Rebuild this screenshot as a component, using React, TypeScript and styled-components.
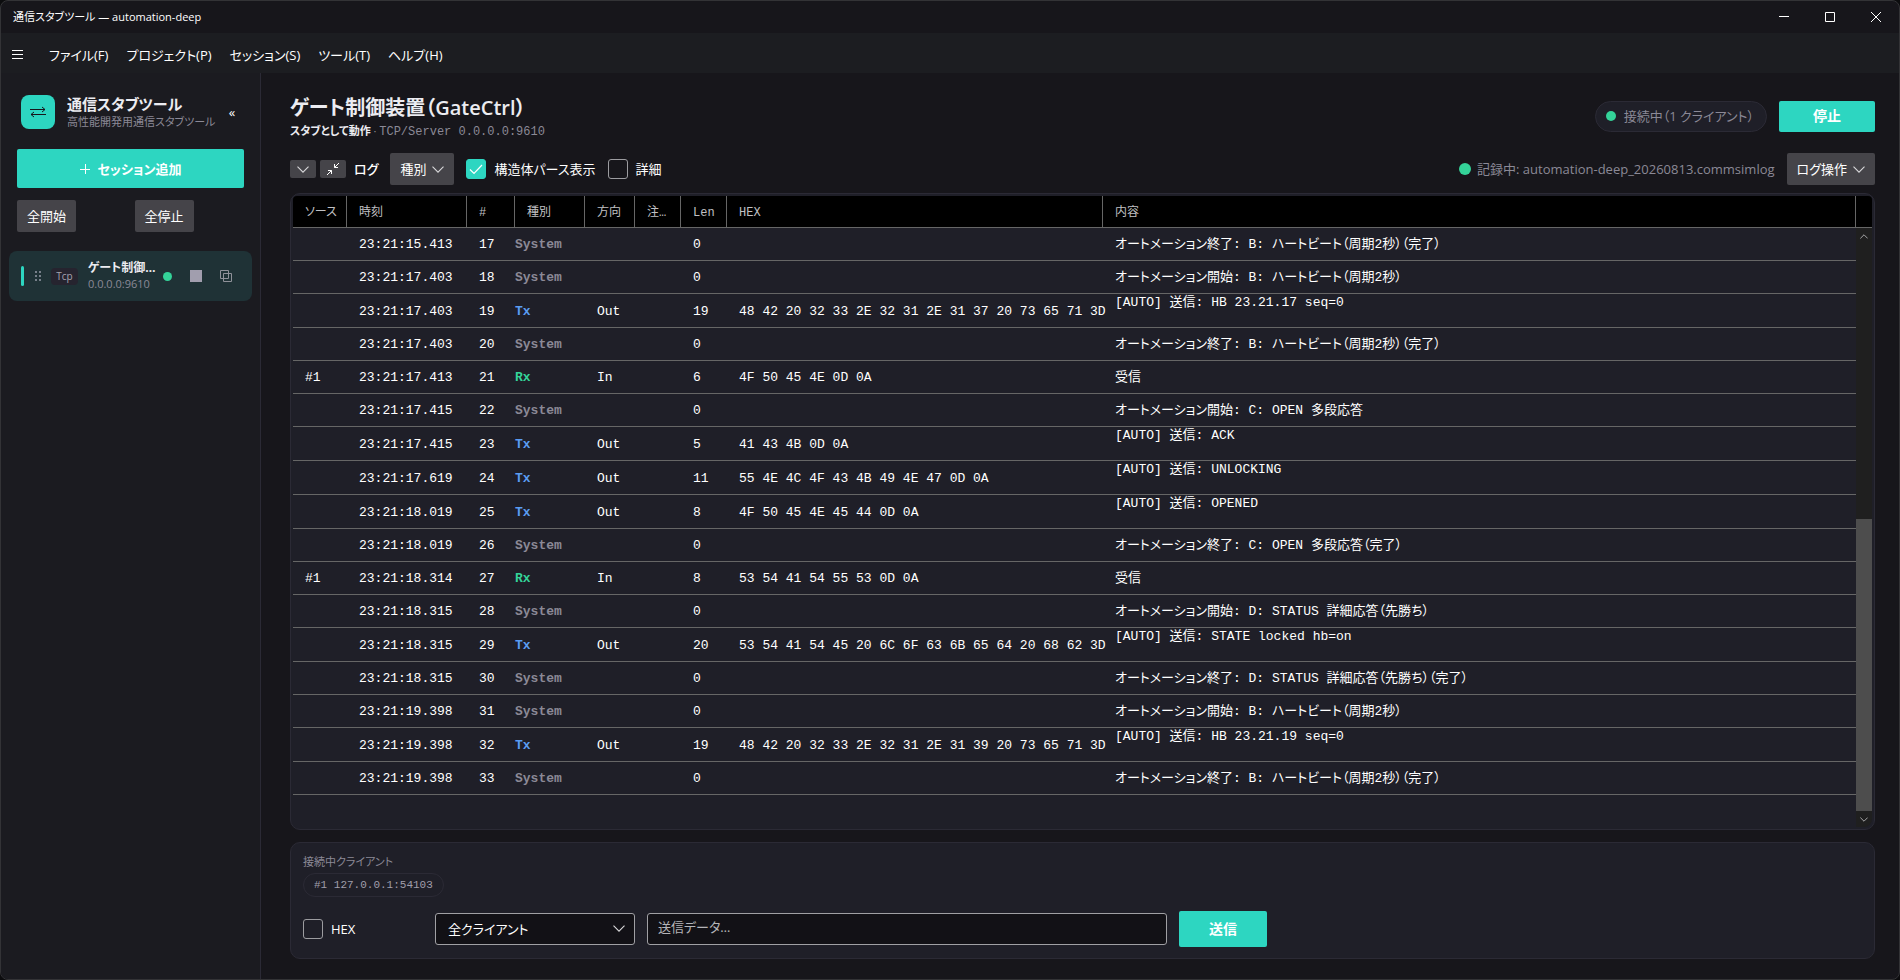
import React from "react";
import styled, { createGlobalStyle, css } from "styled-components";

const c = {
  accent: "#2dd6c1",
  green: "#34d399",
  blue: "#5a9cf2",
  bg: "#17161b",
  side: "#1b1b20",
  menu: "#1c1d21",
  card: "#1f1f28",
  line: "#2b2a35",
  btn: "#454449",
  grid: "#666666",
  muted: "#8b8996",
  text: "#ececf1",
};

const ui = `"Open Sans", "Noto Sans CJK JP", sans-serif`;
const mono = `"Liberation Mono", "Noto Sans CJK JP", monospace`;

const Global = createGlobalStyle`
  * { box-sizing: border-box; }
  body {
    margin: 0;
    background: #0c0c0e;
    color: #ffffff;
    font: 13px/20px ${ui};
    font-feature-settings: "palt";
  }
  button, input, select { font: inherit; font-feature-settings: inherit; color: inherit; margin: 0; }
  button { cursor: pointer; padding: 0; border: 0; background: none; }
  h1, h2, p { margin: 0; }
  svg { display: block; flex: none; }
`;

const Window = styled.div`
  height: 100vh;
  display: flex;
  flex-direction: column;
  border: 1px solid #333336;
  border-radius: 8px;
  overflow: hidden;
  background: ${c.bg};
`;

const TitleBar = styled.header`
  height: 32px;
  flex: none;
  display: flex;
  align-items: center;
  justify-content: space-between;
  padding-left: 12px;
  font-size: 11px;
`;

const Caption = styled.div`
  display: flex;
  align-self: stretch;
`;

const CaptionButton = styled.button`
  width: 46px;
  display: grid;
  place-items: center;
`;

const MenuBar = styled.nav`
  height: 40px;
  flex: none;
  display: flex;
  align-items: center;
  gap: 18px;
  padding: 4px 11px 0;
  background: ${c.menu};
`;

const MenuItem = styled.button`
  white-space: nowrap;
`;

const Burger = styled.button`
  margin-right: 8px;
`;

const Body = styled.div`
  flex: 1;
  min-height: 0;
  display: flex;
`;

const Sidebar = styled.aside`
  width: 260px;
  flex: none;
  padding: 21px 8px;
  background: ${c.side};
  border-right: 1px solid ${c.line};
`;

const Brand = styled.div`
  display: flex;
  align-items: center;
  gap: 12px;
  padding: 0 12px;
`;

const Logo = styled.div`
  width: 34px;
  height: 34px;
  flex: none;
  display: grid;
  place-items: center;
  border-radius: 8px;
  background: ${c.accent};
`;

const BrandText = styled.div`
  flex: 1;
  min-width: 0;
  white-space: nowrap;
`;

const BrandName = styled.h2`
  font-size: 15px;
  line-height: 20px;
  font-weight: 700;
  color: ${c.text};
`;

const Small = styled.p`
  font-size: 11px;
  line-height: 16px;
  color: ${c.muted};
`;

const Collapse = styled.button`
  width: 16px;
`;

const Primary = styled.button`
  display: flex;
  align-items: center;
  justify-content: center;
  gap: 8px;
  background: ${c.accent};
  border-radius: 2px;
  font-size: 14px;
  font-weight: 700;
`;

const AddButton = styled(Primary)`
  width: 227px;
  height: 39px;
  margin: 19px 8px 12px;
  font-size: 13px;
`;

const Gray = styled.button`
  height: 32px;
  padding: 0 10px;
  display: flex;
  align-items: center;
  gap: 6px;
  border-radius: 2px;
  background: ${c.btn};
  white-space: nowrap;
`;

const SideActions = styled.div`
  display: grid;
  grid-template-columns: 1fr 1fr;
  justify-items: start;
  padding: 0 0 0 8px;
  margin-bottom: 19px;
`;

const Session = styled.div`
  height: 50px;
  display: flex;
  align-items: center;
  padding: 0 20px 0 12px;
  border-radius: 8px;
  background: #1f3236;
`;

const ActiveBar = styled.span`
  width: 3px;
  height: 20px;
  border-radius: 2px;
  background: ${c.accent};
`;

const Badge = styled.span`
  width: 27px;
  margin: 0 10px 0 9px;
  border-radius: 4px;
  background: #26242f;
  color: #a5a3b0;
  font-size: 10px;
  line-height: 17px;
  text-align: center;
`;

const SessionText = styled.div`
  width: 66px;
  flex: none;
`;

const SessionName = styled.div`
  font-size: 12px;
  line-height: 16px;
  font-weight: 700;
  color: ${c.text};
  white-space: nowrap;
`;

const SessionAddr = styled.div`
  font-size: 11px;
  line-height: 16px;
  color: ${c.muted};
`;

const Dot = styled.span<{ $size: number }>`
  width: ${(p) => p.$size}px;
  height: ${(p) => p.$size}px;
  flex: none;
  border-radius: 50%;
  background: ${c.green};
`;

const SessionTools = styled.div`
  flex: 1;
  display: flex;
  align-items: center;
  justify-content: space-between;
  margin-left: 9px;
`;

const Main = styled.main`
  flex: 1;
  min-width: 0;
  display: flex;
  flex-direction: column;
  padding: 20px 24px 20px 29px;
`;

const Head = styled.div`
  display: flex;
  justify-content: space-between;
  align-items: center;
  height: 46px;
`;

const HeadText = styled.div`
  padding-top: 2px;
  white-space: nowrap;
`;

const HeadTitle = styled.h1`
  font-size: 20px;
  line-height: 28px;
  font-weight: 600;
  color: ${c.text};
`;

const HeadSub = styled.p`
  font-size: 11px;
  line-height: 18px;
  color: ${c.muted};
  b { color: ${c.text}; }
  span { font-family: ${mono}; font-size: 12px; }
`;

const Row = styled.div<{ $gap: number }>`
  display: flex;
  align-items: center;
  gap: ${(p) => p.$gap}px;
`;

const StatusPill = styled.div`
  height: 31px;
  display: flex;
  align-items: center;
  gap: 8px;
  padding: 0 12px 0 10px;
  border: 1px solid ${c.line};
  border-radius: 16px;
  background: ${c.card};
  color: ${c.muted};
  white-space: nowrap;
`;

const StopButton = styled(Primary)`
  width: 96px;
  height: 31px;
`;

const Toolbar = styled.div`
  display: flex;
  justify-content: space-between;
  align-items: center;
  margin: 14px 0 8px;
`;

const IconButton = styled.button`
  width: 26px;
  height: 18px;
  display: grid;
  place-items: center;
  border-radius: 2px;
  background: ${c.btn};
`;

const ToolLabel = styled.span`
  margin-left: 4px;
  font-weight: 500;
`;

const Recording = styled.div`
  display: flex;
  align-items: center;
  gap: 6px;
  color: ${c.muted};
  white-space: nowrap;
`;

const CheckLabel = styled.label`
  display: flex;
  align-items: center;
  gap: 8px;
  white-space: nowrap;
`;

const CheckBox = styled.span`
  position: relative;
  width: 20px;
  height: 20px;
  input {
    appearance: none;
    display: block;
    width: 20px;
    height: 20px;
    border: 1px solid #9c9ca0;
    border-radius: 3px;
  }
  input:checked { background: ${c.accent}; border-color: ${c.accent}; }
  svg { position: absolute; inset: 0; pointer-events: none; visibility: hidden; }
  input:checked + svg { visibility: visible; }
`;

const Card = styled.section`
  border: 1px solid ${c.line};
  border-radius: 10px;
  background: ${c.card};
`;

const LogCard = styled(Card)`
  flex: 1;
  min-height: 0;
  padding: 2px;
`;

const LogView = styled.div`
  position: relative;
  height: 100%;
  overflow: hidden;
  border-radius: 4px 4px 8px 0;
`;

const LogTable = styled.table`
  width: 100%;
  table-layout: fixed;
  border-collapse: separate;
  border-spacing: 0;
  font-family: ${mono};
  font-size: 13px;
  line-height: 18px;
  white-space: nowrap;
`;

const Th = styled.th`
  height: 32px;
  padding: 2px 0 0 12px;
  text-align: left;
  font-size: 12px;
  font-weight: 400;
  color: #c0c0c4;
  background: #000000;
  border-bottom: 1px solid ${c.grid};
  border-right: 1px solid ${c.grid};
  &:last-child { border-right: 0; padding: 0; }
`;

const Td = styled.td<{ $top?: boolean }>`
  height: 33px;
  padding: 2px 0 0 12px;
  vertical-align: middle;
  border-bottom: 1px solid ${c.grid};
  &:last-child { border-bottom: 0; padding: 0; }
  ${(p) => p.$top && css`height: 34px; padding-top: 0; vertical-align: top;`}
`;

const kindColor: Record<string, string> = { System: c.muted, Tx: c.blue, Rx: c.green };

const KindTd = styled(Td)<{ $kind: string }>`
  padding-left: 0;
  font-weight: 700;
  color: ${(p) => kindColor[p.$kind]};
`;

const ScrollBar = styled.div`
  position: absolute;
  top: 32px;
  right: 0;
  bottom: 0;
  width: 16px;
  display: flex;
  flex-direction: column;
  background: #1f1f1f;
`;

const ScrollArrow = styled.button`
  height: 16px;
  display: grid;
  place-items: center;
`;

const ScrollTrack = styled.div`
  flex: 1;
  display: flex;
  flex-direction: column;
  justify-content: flex-end;
`;

const ScrollThumb = styled.div`
  height: 51.5%;
  background: #4d4d4d;
`;

const SendCard = styled(Card)`
  height: 117px;
  flex: none;
  margin-top: 12px;
  padding: 11px 12px;
`;

const ClientPill = styled.div`
  width: fit-content;
  height: 24px;
  margin: 3px 0 14px;
  padding: 0 10px;
  border: 1px solid ${c.line};
  border-radius: 12px;
  color: #a09eab;
  font: 11px/22px ${mono};
`;

const SendRow = styled.form`
  display: flex;
  align-items: center;
  gap: 12px;
`;

const HexField = styled.div`
  width: 120px;
  flex: none;
`;

const SelectBox = styled.div`
  position: relative;
  width: 200px;
  flex: none;
  select {
    appearance: none;
    display: block;
    width: 100%;
    height: 32px;
    padding: 0 12px;
    background: #121116;
    border: 1px solid #a0a0a4;
    border-radius: 3px;
  }
  svg { position: absolute; right: 10px; top: 12px; pointer-events: none; }
`;

const TextInput = styled.input`
  flex: 0 1 520px;
  min-width: 0;
  height: 32px;
  padding: 0 10px 5px;
  background: #121116;
  border: 1px solid #a0a0a4;
  border-radius: 3px;
  &::placeholder { color: #b4b4b8; opacity: 1; }
`;

const SendButton = styled(Primary)`
  width: 88px;
  height: 36px;
`;

const Chevron = ({ w = 12, up = false, color = "#d8d8da" }: { w?: number; up?: boolean; color?: string }) => (
  <svg width={w} height={w / 2 + 1} viewBox="0 0 12 7" fill="none" stroke={color} strokeWidth="1.1">
    <path d={up ? "M.5 6.4 6 .9l5.5 5.5" : "M.5.6 6 6.1 11.5.6"} />
  </svg>
);

const Check = ({ label, checked = false }: { label: string; checked?: boolean }) => (
  <CheckLabel>
    <CheckBox>
      <input type="checkbox" defaultChecked={checked} />
      <svg width="20" height="20" viewBox="0 0 20 20" fill="none" stroke="#fff" strokeWidth="1.2">
        <path d="m4 10.5 4 4 8-8.500" />
      </svg>
    </CheckBox>
    {label}
  </CheckLabel>
);

type Entry = [src: string, time: string, kind: string, dir: string, len: number, hex: string, body: string];

const entries: Entry[] = [
  ["", "23:21:15.413", "System", "", 0, "", "オートメーション終了: B: ハートビート（周期2秒）（完了）"],
  ["", "23:21:17.403", "System", "", 0, "", "オートメーション開始: B: ハートビート（周期2秒）"],
  ["", "23:21:17.403", "Tx", "Out", 19, "48 42 20 32 33 2E 32 31 2E 31 37 20 73 65 71 3D", "[AUTO] 送信: HB 23.21.17 seq=0"],
  ["", "23:21:17.403", "System", "", 0, "", "オートメーション終了: B: ハートビート（周期2秒）（完了）"],
  ["#1", "23:21:17.413", "Rx", "In", 6, "4F 50 45 4E 0D 0A", "受信"],
  ["", "23:21:17.415", "System", "", 0, "", "オートメーション開始: C: OPEN 多段応答"],
  ["", "23:21:17.415", "Tx", "Out", 5, "41 43 4B 0D 0A", "[AUTO] 送信: ACK"],
  ["", "23:21:17.619", "Tx", "Out", 11, "55 4E 4C 4F 43 4B 49 4E 47 0D 0A", "[AUTO] 送信: UNLOCKING"],
  ["", "23:21:18.019", "Tx", "Out", 8, "4F 50 45 4E 45 44 0D 0A", "[AUTO] 送信: OPENED"],
  ["", "23:21:18.019", "System", "", 0, "", "オートメーション終了: C: OPEN 多段応答（完了）"],
  ["#1", "23:21:18.314", "Rx", "In", 8, "53 54 41 54 55 53 0D 0A", "受信"],
  ["", "23:21:18.315", "System", "", 0, "", "オートメーション開始: D: STATUS 詳細応答（先勝ち）"],
  ["", "23:21:18.315", "Tx", "Out", 20, "53 54 41 54 45 20 6C 6F 63 6B 65 64 20 68 62 3D", "[AUTO] 送信: STATE locked hb=on"],
  ["", "23:21:18.315", "System", "", 0, "", "オートメーション終了: D: STATUS 詳細応答（先勝ち）（完了）"],
  ["", "23:21:19.398", "System", "", 0, "", "オートメーション開始: B: ハートビート（周期2秒）"],
  ["", "23:21:19.398", "Tx", "Out", 19, "48 42 20 32 33 2E 32 31 2E 31 39 20 73 65 71 3D", "[AUTO] 送信: HB 23.21.19 seq=0"],
  ["", "23:21:19.398", "System", "", 0, "", "オートメーション終了: B: ハートビート（周期2秒）（完了）"],
];

const columns: [string, number | undefined][] = [
  ["ソース", 54], ["時刻", 120], ["#", 48], ["種別", 70], ["方向", 50],
  ["注…", 46], ["Len", 46], ["HEX", 376], ["内容", undefined], ["", 16],
];

export default function App() {
  return (
    <>
      <Global />
      <Window>
        <TitleBar>
          <span>通信スタブツール — automation-deep</span>
          <Caption>
            <CaptionButton aria-label="最小化">
              <svg width="10" height="10" stroke="#fff"><path d="M0 4.5h10" /></svg>
            </CaptionButton>
            <CaptionButton aria-label="最大化">
              <svg width="10" height="10" stroke="#fff" fill="none"><path d="M.5.5h9v9h-9z" /></svg>
            </CaptionButton>
            <CaptionButton aria-label="閉じる">
              <svg width="10" height="10" stroke="#fff"><path d="m0 0 10 10M10 0 0 10" /></svg>
            </CaptionButton>
          </Caption>
        </TitleBar>
        <MenuBar>
          <Burger aria-label="メニュー">
            <svg width="11" height="12" stroke="#fff"><path d="M0 1.5h11M0 5.5h11M0 9.5h11" /></svg>
          </Burger>
          {["ファイル(F)", "プロジェクト(P)", "セッション(S)", "ツール(T)", "ヘルプ(H)"].map((m) => (
            <MenuItem key={m}>{m}</MenuItem>
          ))}
        </MenuBar>
        <Body>
          <Sidebar>
            <Brand>
              <Logo>
                <svg width="16" height="12" viewBox="0 0 16 12" fill="none" stroke="#17161b">
                  <path d="M0 3.5h15M12 1l3 2.5L12 6M16 8.5H1M4 6 1 8.5 4 11" />
                </svg>
              </Logo>
              <BrandText>
                <BrandName>通信スタブツール</BrandName>
                <Small>高性能開発用通信スタブツール</Small>
              </BrandText>
              <Collapse aria-label="サイドバーを閉じる">«</Collapse>
            </Brand>
            <AddButton>
              <svg width="10" height="10" stroke="#fff"><path d="M0 5.5h10M5.5 0v10" /></svg>
              セッション追加
            </AddButton>
            <SideActions>
              <Gray>全開始</Gray>
              <Gray>全停止</Gray>
            </SideActions>
            <Session>
              <ActiveBar />
              <svg width="18" height="10" viewBox="-11 0 18 10" fill="#77808a">
                {[0, 4, 8].flatMap((y) => [0, 4].map((x) => <rect key={`${x}-${y}`} x={x} y={y} width="2" height="2" />))}
              </svg>
              <Badge>Tcp</Badge>
              <SessionText>
                <SessionName>ゲート制御…</SessionName>
                <SessionAddr>0.0.0.0:9610</SessionAddr>
              </SessionText>
              <SessionTools>
                <Dot $size={9} />
                <button aria-label="停止">
                  <svg width="12" height="12" fill="#a19eae"><path d="M0 0h12v12H0z" /></svg>
                </button>
                <button aria-label="複製">
                  <svg width="12" height="12" fill="none" stroke="#8f9199"><path d="M.5.5h8v8h-8zM3.5 3.5h8v8h-8z" /></svg>
                </button>
              </SessionTools>
            </Session>
          </Sidebar>
          <Main>
            <Head>
              <HeadText>
                <HeadTitle>ゲート制御装置（GateCtrl）</HeadTitle>
                <HeadSub>
                  <b>スタブとして動作</b> · <span>TCP/Server 0.0.0.0:9610</span>
                </HeadSub>
              </HeadText>
              <Row $gap={12}>
                <StatusPill>
                  <Dot $size={10} />
                  接続中（1 クライアント）
                </StatusPill>
                <StopButton>停止</StopButton>
              </Row>
            </Head>
            <Toolbar>
              <Row $gap={12}>
                <Row $gap={4}>
                  <IconButton aria-label="折りたたむ"><Chevron /></IconButton>
                  <IconButton aria-label="縮小">
                    <svg width="12" height="12" viewBox="0 0 12 12" fill="none" stroke="#fff">
                      <path d="M12 0 7.5 4.5M7.5 1v3.5H11M0 12l4.5-4.5M4.5 11V7.5H1" />
                    </svg>
                  </IconButton>
                  <ToolLabel>ログ</ToolLabel>
                </Row>
                <Gray>種別 <Chevron /></Gray>
                <Check label="構造体パース表示" checked />
                <Check label="詳細" />
              </Row>
              <Row $gap={12}>
                <Recording>
                  <Dot $size={12} />
                  記録中: automation-deep_20260813.commsimlog
                </Recording>
                <Gray>ログ操作 <Chevron /></Gray>
              </Row>
            </Toolbar>
            <LogCard>
              <LogView>
                <LogTable>
                  <colgroup>
                    {columns.map(([name, w]) => <col key={name} width={w} />)}
                  </colgroup>
                  <thead>
                    <tr>{columns.map(([name]) => <Th key={name}>{name}</Th>)}</tr>
                  </thead>
                  <tbody>
                    {entries.map(([src, time, kind, dir, len, hex, body], i) => (
                      <tr key={i}>
                        <Td>{src}</Td>
                        <Td>{time}</Td>
                        <Td>{17 + i}</Td>
                        <KindTd $kind={kind}>{kind}</KindTd>
                        <Td>{dir}</Td>
                        <Td />
                        <Td>{len}</Td>
                        <Td>{hex}</Td>
                        <Td $top={kind === "Tx"}>{body}</Td>
                        <Td />
                      </tr>
                    ))}
                  </tbody>
                </LogTable>
                <ScrollBar>
                  <ScrollArrow aria-label="上へ"><Chevron w={8} up /></ScrollArrow>
                  <ScrollTrack><ScrollThumb /></ScrollTrack>
                  <ScrollArrow aria-label="下へ"><Chevron w={8} /></ScrollArrow>
                </ScrollBar>
              </LogView>
            </LogCard>
            <SendCard>
              <Small>接続中クライアント</Small>
              <ClientPill>#1 127.0.0.1:54103</ClientPill>
              <SendRow onSubmit={(e) => e.preventDefault()}>
                <HexField><Check label="HEX" /></HexField>
                <SelectBox>
                  <select aria-label="送信先"><option>全クライアント</option></select>
                  <Chevron />
                </SelectBox>
                <TextInput aria-label="送信データ" placeholder="送信データ…" />
                <SendButton type="submit">送信</SendButton>
              </SendRow>
            </SendCard>
          </Main>
        </Body>
      </Window>
    </>
  );
}
